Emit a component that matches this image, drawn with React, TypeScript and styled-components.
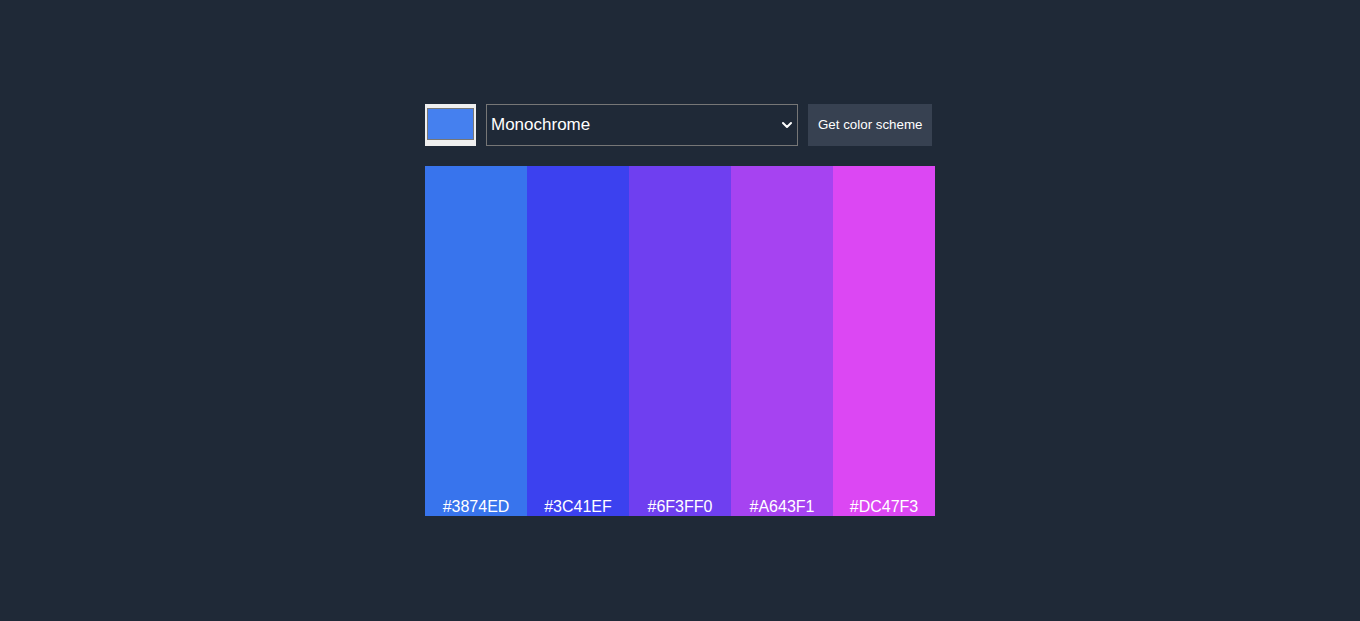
import React from "react";
import styled, { createGlobalStyle } from "styled-components";

const GlobalStyle = createGlobalStyle`
  html, body {
    margin: 0;
    padding: 0;
    background: #1f2937;
  }
  body {
    font-family: "Liberation Sans", Arial, sans-serif;
    color: #ffffff;
  }
`;

const Page = styled.main`
  min-height: 621px;
  display: flex;
  justify-content: center;
  padding-top: 104px;
  box-sizing: border-box;
`;

const Container = styled.div`
  width: 510px;
  display: flex;
  flex-direction: column;
  gap: 20px;
`;

const Controls = styled.form`
  display: flex;
  align-items: stretch;
  gap: 10px;
  height: 42px;
  margin: 0;
`;

const ColorFrame = styled.div`
  width: 51px;
  height: 42px;
  box-sizing: border-box;
  background: #efefef;
  padding: 4px 2px 6px 2px;
  display: flex;
`;

const Swatch = styled.div<{ $color: string }>`
  flex: 1;
  border: 1px solid #777777;
  background: ${(p) => p.$color};
`;

const SelectWrap = styled.div`
  position: relative;
  width: 312px;
  height: 42px;
`;

const Select = styled.select`
  appearance: none;
  -webkit-appearance: none;
  width: 100%;
  height: 100%;
  box-sizing: border-box;
  background: #1f2937;
  color: #ffffff;
  border: 1px solid #767676;
  border-radius: 0;
  padding: 0 24px 2px 4px;
  font-family: "Liberation Sans", Arial, sans-serif;
  font-size: 17px;
  outline: none;
`;

const Chevron = styled.svg`
  position: absolute;
  right: 6px;
  top: 50%;
  transform: translateY(-50%);
  pointer-events: none;
`;

const Button = styled.button`
  width: 124px;
  height: 42px;
  border: none;
  border-radius: 0;
  background: #374151;
  color: #ffffff;
  font-family: "Liberation Sans", Arial, sans-serif;
  font-size: 13.333px;
  padding: 0 10px 2px 10px;
  cursor: pointer;
  white-space: nowrap;
`;

const Palette = styled.div`
  display: grid;
  grid-template-columns: repeat(5, 1fr);
  height: 350px;
`;

const Column = styled.div<{ $color: string }>`
  background: ${(p) => p.$color};
  display: flex;
  align-items: flex-end;
  justify-content: center;
`;

const Label = styled.span`
  font-size: 16px;
  line-height: 18px;
  color: #ffffff;
`;

const colors = ["#3874ED", "#3C41EF", "#6F3FF0", "#A643F1", "#DC47F3"];

export default function App() {
  return (
    <>
      <GlobalStyle />
      <Page>
        <Container>
          <Controls onSubmit={(e) => e.preventDefault()}>
            <ColorFrame>
              <Swatch $color="#4580ef" />
            </ColorFrame>
            <SelectWrap>
              <Select defaultValue="monochrome">
                <option value="monochrome">Monochrome</option>
                <option value="monochrome-dark">Monochrome-dark</option>
                <option value="monochrome-light">Monochrome-light</option>
                <option value="analogic">Analogic</option>
                <option value="complement">Complement</option>
                <option value="analogic-complement">Analogic-complement</option>
                <option value="triad">Triad</option>
              </Select>
              <Chevron width="10" height="7" viewBox="0 0 10 7" fill="none">
                <path d="M1 1.5 L5 5.5 L9 1.5" stroke="#ffffff" strokeWidth="2" strokeLinecap="round" strokeLinejoin="round" />
              </Chevron>
            </SelectWrap>
            <Button type="submit">Get color scheme</Button>
          </Controls>
          <Palette>
            {colors.map((c) => (
              <Column key={c} $color={c}>
                <Label>{c}</Label>
              </Column>
            ))}
          </Palette>
        </Container>
      </Page>
    </>
  );
}
